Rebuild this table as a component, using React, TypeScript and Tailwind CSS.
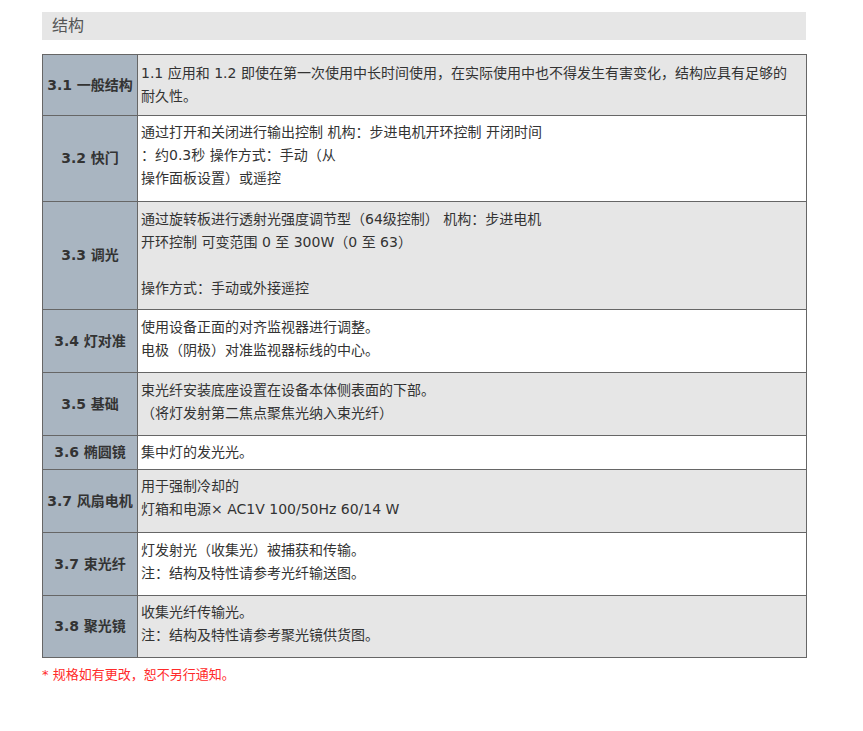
import React from 'react'

interface Row {
  label: string
  lines: string[]
  gray: boolean
  pad: string
}

const rows: Row[] = [
  {
    label: '3.1 一般结构',
    lines: ['1.1 应用和 1.2 即使在第一次使用中长时间使用，在实际使用中也不得发生有害变化，结构应具有足够的', '耐久性。'],
    gray: true,
    pad: 'pt-[7px] pb-[7px]'
  },
  {
    label: '3.2 快门',
    lines: ['通过打开和关闭进行输出控制 机构：步进电机开环控制 开闭时间', '：约0.3秒 操作方式：手动（从', '操作面板设置）或遥控'],
    gray: false,
    pad: 'pt-[5px] pb-[11px]'
  },
  {
    label: '3.3 调光',
    lines: ['通过旋转板进行透射光强度调节型（64级控制） 机构：步进电机', '开环控制 可变范围 0 至 300W（0 至 63）', '', '操作方式：手动或外接遥控'],
    gray: true,
    pad: 'pt-[6px] pb-[9px]'
  },
  {
    label: '3.4 灯对准',
    lines: ['使用设备正面的对齐监视器进行调整。', '电极（阴极）对准监视器标线的中心。'],
    gray: false,
    pad: 'pt-[6px] pb-[10px]'
  },
  {
    label: '3.5 基础',
    lines: ['束光纤安装底座设置在设备本体侧表面的下部。', '（将灯发射第二焦点聚焦光纳入束光纤）'],
    gray: true,
    pad: 'pt-[6px] pb-[10px]'
  },
  {
    label: '3.6 椭圆镜',
    lines: ['集中灯的发光光。'],
    gray: false,
    pad: 'pt-[5px] pb-[5px]'
  },
  {
    label: '3.7 风扇电机',
    lines: ['用于强制冷却的', '灯箱和电源× AC1V 100/50Hz 60/14 W'],
    gray: true,
    pad: 'pt-[5px] pb-[11px]'
  },
  {
    label: '3.7 束光纤',
    lines: ['灯发射光（收集光）被捕获和传输。', '注：结构及特性请参考光纤输送图。'],
    gray: false,
    pad: 'pt-[6px] pb-[10px]'
  },
  {
    label: '3.8 聚光镜',
    lines: ['收集光纤传输光。', '注：结构及特性请参考聚光镜供货图。'],
    gray: true,
    pad: 'pt-[5px] pb-[10px]'
  }
]

export default function App() {
  return (
    <div className="min-h-[731px] w-[863px] bg-white pt-[12px] pl-[42px] text-[#333] [font-family:'DejaVu_Sans','Noto_Sans_CJK_SC',sans-serif]">
      {/* Section title */}
      <div className="w-[764px] h-[28px] bg-[#e6e6e6] pl-[10px] flex items-center text-[16px] text-[#555]">
        结构
      </div>

      {/* Spec table */}
      <table className="mt-[14px] w-[765px] border-collapse border border-[#666] text-[14px]">
        <tbody>
          {rows.map((row, i) => (
            <tr key={i}>
              <td className="w-[95px] border border-[#666] bg-[#a9b5c1] text-center align-middle font-bold text-[#333] px-0 whitespace-nowrap">
                {row.label}
              </td>
              <td
                className={
                  (row.gray ? 'bg-[#e6e6e6] ' : 'bg-white ') +
                  row.pad +
                  ' border border-[#666] pl-[3px] pr-[4px] leading-[23px] align-middle whitespace-nowrap'
                }
              >
                {row.lines.map((line, j) => (
                  <div key={j} className="h-[23px]">
                    {line}
                  </div>
                ))}
              </td>
            </tr>
          ))}
        </tbody>
      </table>

      <div className="mt-[8px] text-[13px] text-[#ff2a2a] leading-[18px]">* 规格如有更改，恕不另行通知。</div>
    </div>
  )
}
